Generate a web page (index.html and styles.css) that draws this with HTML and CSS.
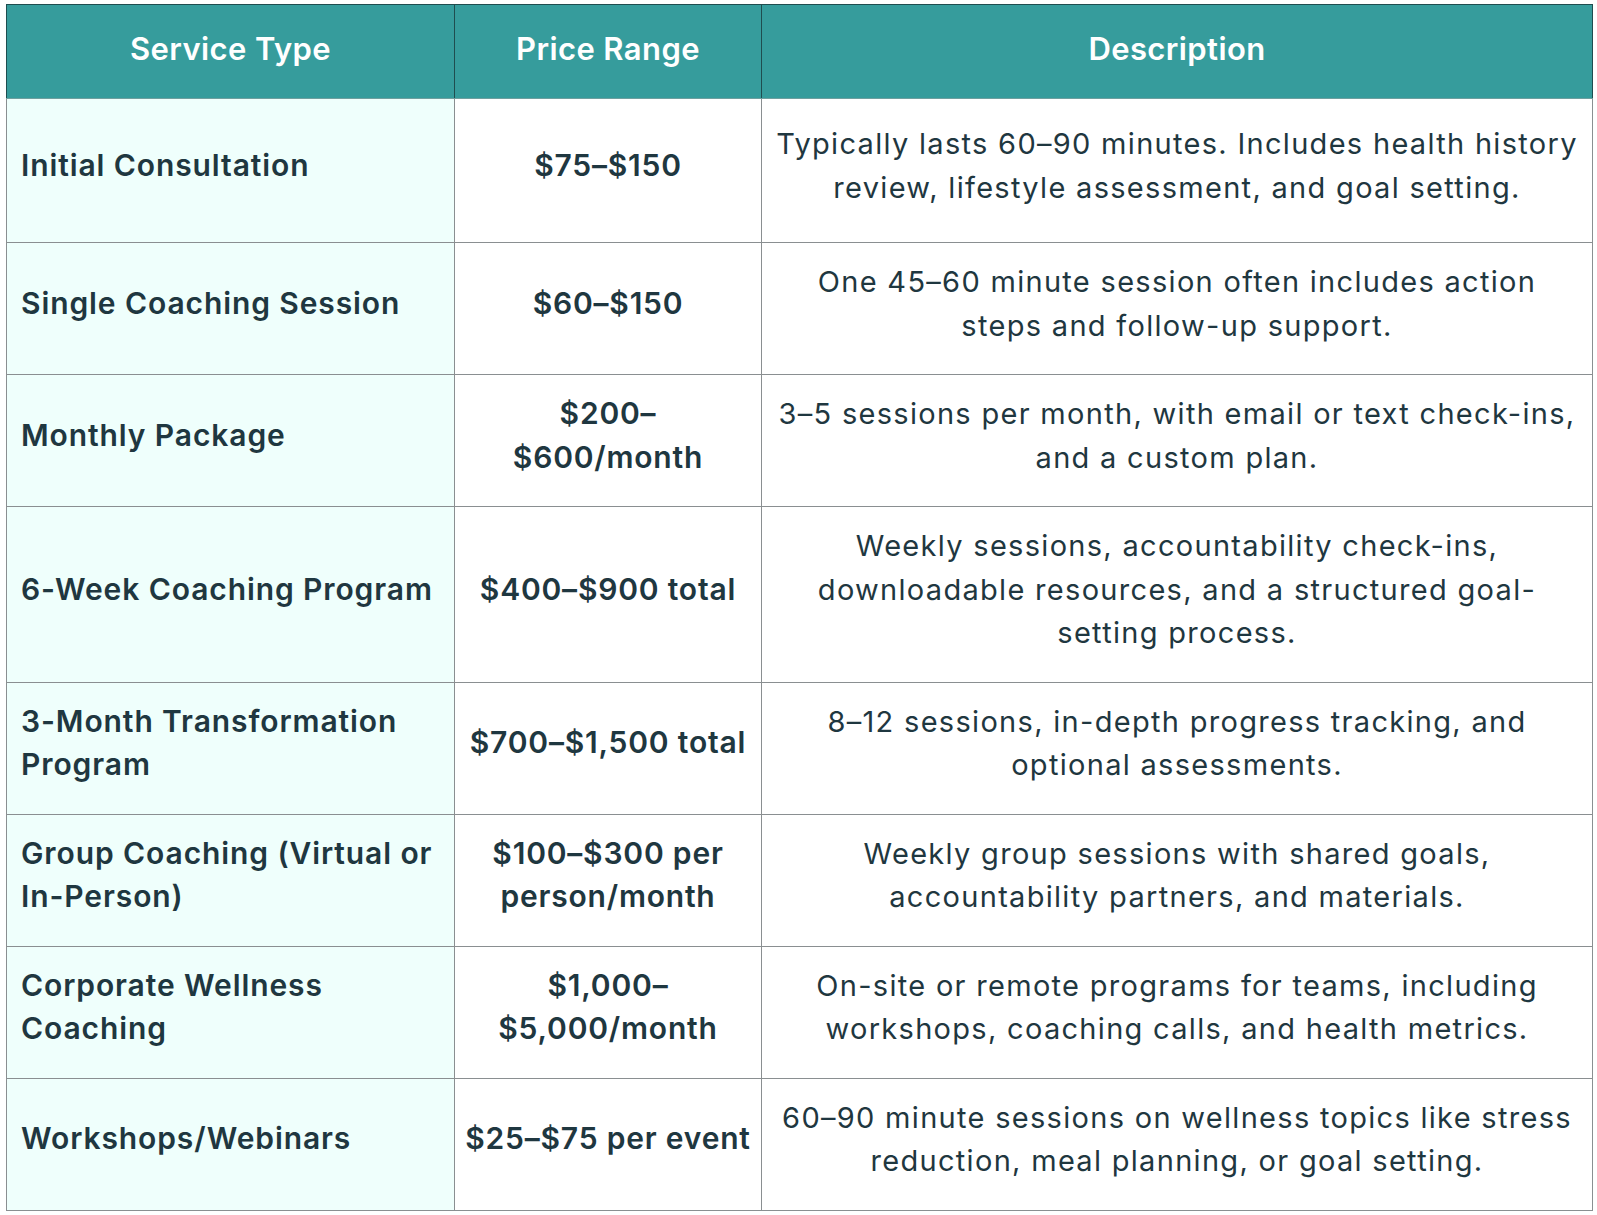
FILE: index.html
```html
<!DOCTYPE html>
<html lang="en">
<head>
<meta charset="utf-8">
<title>Wellness Coaching Pricing</title>
<link rel="stylesheet" href="styles.css">
</head>
<body>
<table class="pricing">
  <colgroup>
    <col class="c-service">
    <col class="c-price">
    <col class="c-desc">
  </colgroup>
  <thead>
    <tr>
      <th>Service Type</th>
      <th>Price Range</th>
      <th>Description</th>
    </tr>
  </thead>
  <tbody>
    <tr class="first">
      <td class="service">Initial Consultation</td>
      <td class="price">$75–$150</td>
      <td class="desc">Typically lasts 60–90 minutes. Includes health history review, lifestyle assessment, and goal setting.</td>
    </tr>
    <tr>
      <td class="service">Single Coaching Session</td>
      <td class="price">$60–$150</td>
      <td class="desc">One 45–60 minute session often includes action steps and follow-up support.</td>
    </tr>
    <tr>
      <td class="service">Monthly Package</td>
      <td class="price">$200–<br>$600/month</td>
      <td class="desc">3–5 sessions per month, with email or text check-ins, and a custom plan.</td>
    </tr>
    <tr>
      <td class="service">6-Week Coaching Program</td>
      <td class="price">$400–$900 total</td>
      <td class="desc">Weekly sessions, accountability check-ins, downloadable resources, and a structured goal-setting process.</td>
    </tr>
    <tr>
      <td class="service">3-Month Transformation Program</td>
      <td class="price">$700–$1,500 total</td>
      <td class="desc">8–12 sessions, in-depth progress tracking, and optional assessments.</td>
    </tr>
    <tr>
      <td class="service">Group Coaching (Virtual or <span class="nowrap">In-Person)</span></td>
      <td class="price">$100–$300 per person/month</td>
      <td class="desc">Weekly group sessions with shared goals, accountability partners, and materials.</td>
    </tr>
    <tr>
      <td class="service">Corporate Wellness Coaching</td>
      <td class="price">$1,000–<br>$5,000/month</td>
      <td class="desc">On-site or remote programs for teams, including workshops, coaching calls, and health metrics.</td>
    </tr>
    <tr>
      <td class="service">Workshops/Webinars</td>
      <td class="price">$25–$75 per event</td>
      <td class="desc">60–90 minute sessions on wellness topics like stress reduction, meal planning, or goal setting.</td>
    </tr>
  </tbody>
</table>
</body>
</html>
```
FILE: styles.css
```css
html, body {
  margin: 0;
  padding: 0;
  background: #ffffff;
}

body {
  padding: 4px 5px 6px 6px;
  font-family: "Inter", "Liberation Sans", sans-serif;
  color: #1f3740;
}

.pricing {
  width: 1587px;
  border-collapse: collapse;
  table-layout: fixed;
}

.c-service { width: 448px; }
.c-price { width: 307px; }
.c-desc { width: auto; }

.pricing th {
  background: #369c9c;
  color: #ffffff;
  font-weight: 600;
  font-size: 31px;
  letter-spacing: 0.4px;
  height: 94px;
  padding: 0 14px 6px;
  text-align: center;
  border: 1px solid #1f4d4f;
  border-bottom-color: #6f9f9f;
  box-sizing: border-box;
}

.pricing td {
  border: 1px solid #8a8f91;
  font-size: 30px;
  line-height: 43.5px;
  height: 132px;
  padding: 17px 14px 27px;
  box-sizing: border-box;
  vertical-align: middle;
}

.pricing tr.first td {
  height: 144px;
  padding-top: 23px;
  padding-bottom: 33px;
}

.service {
  background: #effffc;
  font-weight: 600;
  letter-spacing: 0.9px;
  text-align: left;
}

.pricing td.price {
  font-weight: 600;
  letter-spacing: 0.8px;
  text-align: center;
  padding-left: 6px;
  padding-right: 6px;
}

.pricing td.desc {
  font-size: 29px;
  font-weight: 400;
  letter-spacing: 1.3px;
  text-align: center;
  padding-left: 13px;
  padding-right: 13px;
}

.nowrap {
  white-space: nowrap;
}
```
